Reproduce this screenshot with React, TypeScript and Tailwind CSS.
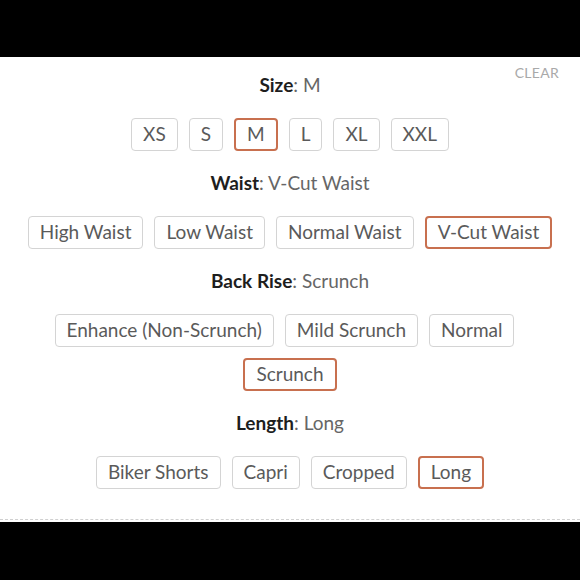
import React from "react";

type Group = { label: string; value: string; options: string[] };

const groups: Group[] = [
  { label: "Size", value: "M", options: ["XS", "S", "M", "L", "XL", "XXL"] },
  { label: "Waist", value: "V-Cut Waist", options: ["High Waist", "Low Waist", "Normal Waist", "V-Cut Waist"] },
  { label: "Back Rise", value: "Scrunch", options: ["Enhance (Non-Scrunch)", "Mild Scrunch", "Normal", "Scrunch"] },
  { label: "Length", value: "Long", options: ["Biker Shorts", "Capri", "Cropped", "Long"] },
];

export default function App() {
  return (
    <div className="w-[580px] h-[580px] bg-black flex flex-col" style={{ fontFamily: "Lato, 'Open Sans', sans-serif" }}>
      <div className="h-[57px] shrink-0 bg-black" />
      <div className="relative h-[465px] bg-white flex flex-col items-center pt-[16px] px-[20px]">
        <button className="absolute right-[21px] top-[8px] text-[14px] leading-[16px] tracking-[0.3px] text-[#a9a9a9]">
          CLEAR
        </button>
        {groups.map((g) => (
          <div key={g.label} className="w-full flex flex-col items-center mb-[20px]">
            <div className="text-[19px] leading-[24px] text-[#666]">
              <span className="font-bold text-[#1e1e1e]">{g.label}</span>: {g.value}
            </div>
            <div className="mt-[21px] flex flex-wrap justify-center gap-y-[11px] w-full">
              {g.options.map((o) => {
                const sel = o === g.value;
                return (
                  <div
                    key={o}
                    className={
                      "mr-[11px] last:mr-0 h-[33px] px-[11px] flex items-center rounded-[4px] text-[19px] text-[#5a5a5a] " +
                      (sel ? "border-2 border-[#c8704f]" : "border-[1.5px] border-[#d4d4d4]")
                    }
                  >
                    {o}
                  </div>
                );
              })}
            </div>
          </div>
        ))}
        <div className="absolute left-0 right-0 bottom-[2px] border-t border-dashed border-[#d0d0d0]" />
      </div>
      <div className="flex-1 bg-black" />
    </div>
  );
}
